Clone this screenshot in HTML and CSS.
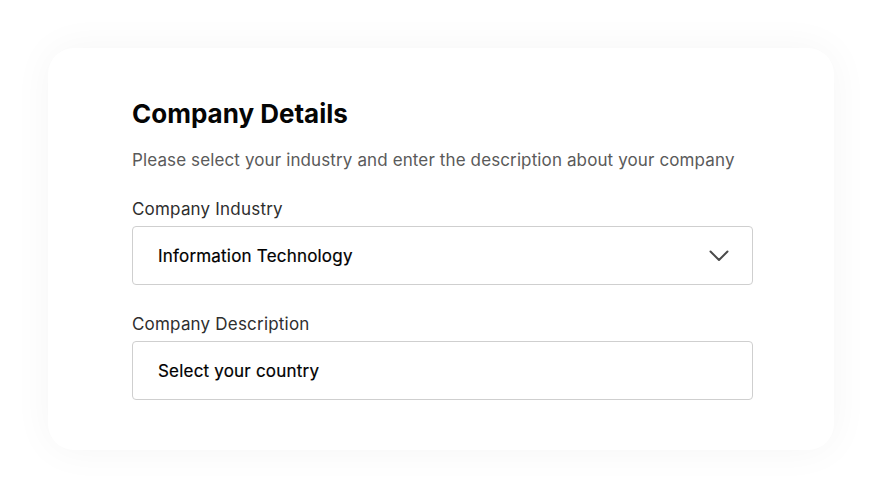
FILE: index.html
```html
<!DOCTYPE html>
<html lang="en">
<head>
<meta charset="utf-8">
<title>Company Details</title>
<link rel="stylesheet" href="styles.css">
</head>
<body>
<main class="card">
  <h1 class="title">Company Details</h1>
  <p class="subtitle">Please select your industry and enter the description about your company</p>
  <div class="field">
    <label class="label">Company Industry</label>
    <div class="input select">
      <span>Information Technology</span>
      <svg class="chevron" width="20" height="12" viewBox="0 0 20 12" fill="none"><path d="M1.5 1.5 10 10 18.5 1.5" stroke="#4a4a4a" stroke-width="2" stroke-linecap="round" stroke-linejoin="round"/></svg>
    </div>
  </div>
  <div class="field">
    <label class="label">Company Description</label>
    <div class="input"><span>Select your country</span></div>
  </div>
</main>
</body>
</html>
```
FILE: styles.css
```css
* { box-sizing: border-box; }
html, body { margin: 0; padding: 0; background: #fff; }
body {
  font-family: Inter, "Noto Sans", sans-serif;
  padding: 48px;
}
.card {
  width: 786px;
  height: 402px;
  background: #fff;
  border-radius: 26px;
  box-shadow: 0 0 40px rgba(0, 0, 0, 0.045);
  padding: 50px 81px 0 84px;
}
.title {
  margin: 0;
  font-size: 26px;
  line-height: 32px;
  font-weight: 700;
  color: #050505;
}
.subtitle {
  margin: 18px 0 0;
  font-size: 17px;
  line-height: 24px;
  letter-spacing: 0.12px;
  color: #5a5a5a;
}
.field { display: flex; flex-direction: column; }
.field + .field { margin-top: 27px; }
.subtitle + .field { margin-top: 25px; }
.label {
  font-size: 17px;
  line-height: 24px;
  letter-spacing: 0.2px;
  color: #2e2e2e;
  margin-bottom: 5px;
}
.input {
  height: 59px;
  border: 1px solid #cfcfcf;
  border-radius: 4px;
  display: flex;
  align-items: center;
  justify-content: space-between;
  padding: 0 23px 0 25px;
  font-size: 17px;
  font-weight: 400;
  letter-spacing: 0.2px;
  color: #000;
  -webkit-text-stroke: 0.2px #000;
}
.chevron { display: block; }
```
